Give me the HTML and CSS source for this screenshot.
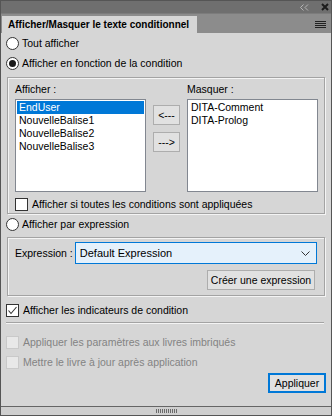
FILE: index.html
```html
<!DOCTYPE html>
<html lang="fr">
<head>
    <meta charset="UTF-8">
    <title>Afficher/Masquer le texte conditionnel</title>
    <link rel="stylesheet" href="styles.css">
</head>
<body>
    <div class="panel">
        <div class="titlebar">
            <svg class="collapse" width="9" height="7" viewBox="0 0 9 7">
                <path d="M3.5 0.5 L0.5 3.5 L3.5 6.5 M8 0.5 L5 3.5 L8 6.5" fill="none" stroke="#b4b4b4" stroke-width="1"/>
            </svg>
            <svg class="close" width="8" height="8" viewBox="0 0 8 8">
                <path d="M1 1 L7 7 M7 1 L1 7" stroke="#1c1c1c" stroke-width="2"/>
            </svg>
        </div>

        <div class="tabs">
            <div class="tab">Afficher/Masquer le texte conditionnel</div>
            <svg class="menu" width="11" height="8" viewBox="0 0 11 8">
                <path d="M0 0.5 H11 M0 2.5 H11 M0 4.5 H11 M0 6.5 H11" stroke="#222" stroke-width="1"/>
            </svg>
        </div>

        <div class="content">
            <div class="opt"><span class="radio"></span>Tout afficher</div>
            <div class="opt"><span class="radio on"></span>Afficher en fonction de la condition</div>

            <div class="group cond">
                <div class="cols">
                    <div class="col">
                        <div class="lbl">Afficher :</div>
                        <ul class="list">
                            <li class="sel">EndUser</li>
                            <li>NouvelleBalise1</li>
                            <li>NouvelleBalise2</li>
                            <li>NouvelleBalise3</li>
                        </ul>
                    </div>
                    <div class="movers">
                        <button class="btn small">&lt;---</button>
                        <button class="btn small">---&gt;</button>
                    </div>
                    <div class="col">
                        <div class="lbl">Masquer :</div>
                        <ul class="list">
                            <li>DITA-Comment</li>
                            <li>DITA-Prolog</li>
                        </ul>
                    </div>
                </div>
                <div class="opt sub"><span class="check"></span>Afficher si toutes les conditions sont appliquées</div>
            </div>

            <div class="opt expr-opt"><span class="radio"></span>Afficher par expression</div>

            <div class="group expr">
                <div class="expr-row">
                    <span class="expr-label">Expression :</span>
                    <div class="select">
                        <span>Default Expression</span>
                        <svg width="9" height="5" viewBox="0 0 9 5">
                            <path d="M0.5 0.5 L4.5 4.5 L8.5 0.5" fill="none" stroke="#333" stroke-width="1"/>
                        </svg>
                    </div>
                </div>
                <div class="expr-actions">
                    <button class="btn create">Créer une expression</button>
                </div>
            </div>

            <div class="opt flags">
                <span class="check">
                    <svg width="11" height="11" viewBox="0 0 11 11">
                        <path d="M1.5 5.5 L4 8.5 L9.5 2" fill="none" stroke="#333" stroke-width="1.1"/>
                    </svg>
                </span>Afficher les indicateurs de condition
            </div>
            <div class="sep"></div>
            <div class="opt off"><span class="check"></span>Appliquer les paramètres aux livres imbriqués</div>
            <div class="opt off"><span class="check"></span>Mettre le livre à jour après application</div>

            <div class="footer-actions">
                <button class="btn apply">Appliquer</button>
            </div>
        </div>

        <div class="grip-bar">
            <div class="grip"></div>
        </div>
    </div>
</body>
</html>
```

FILE: styles.css
```css
body {
    margin: 0;
    font-family: "Liberation Sans", Arial, sans-serif;
    font-size: 10.5px;
    color: #000;
}
.panel {
    width: 332px;
    height: 416px;
    box-sizing: border-box;
    border: 1px solid #555;
    background-color: #d6d6d6;
    display: flex;
    flex-direction: column;
}
.titlebar {
    height: 12px;
    background-color: #6f6f6f;
    display: flex;
    justify-content: flex-end;
    align-items: center;
    gap: 12px;
    padding-right: 2px;
}
.tabs {
    height: 20px;
    box-sizing: border-box;
    padding-top: 2px;
    background-color: #8c8c8c;
    border-top: 1px solid #7c7c7c;
    display: flex;
    align-items: stretch;
    justify-content: space-between;
}
.tab {
    width: 195px;
    margin-left: 1px;
    background-color: #d6d6d6;
    font-weight: bold;
    font-size: 10px;
    line-height: 18px;
    padding-left: 6px;
    box-sizing: border-box;
}
.tabs .menu {
    align-self: center;
    margin: 0 5px 0 0;
}
.content {
    flex: 1;
    padding: 0 5px 0 5px;
    display: flex;
    flex-direction: column;
}
.opt {
    height: 20px;
    display: flex;
    align-items: center;
    white-space: nowrap;
}
.radio {
    width: 13px;
    height: 13px;
    box-sizing: border-box;
    border: 1px solid #333;
    border-radius: 50%;
    background-color: #fff;
    margin-right: 3px;
    display: flex;
    align-items: center;
    justify-content: center;
}
.radio.on::after {
    content: "";
    width: 7px;
    height: 7px;
    border-radius: 50%;
    background-color: #1a1a1a;
}
.check {
    width: 13px;
    height: 13px;
    box-sizing: border-box;
    border: 1px solid #333;
    background-color: #fff;
    margin-right: 4px;
    display: flex;
    align-items: center;
    justify-content: center;
}
.opt.off {
    color: #838383;
}
.opt.off .check {
    border-color: #c9c9c9;
    background-color: #e8e8e8;
}
.group {
    margin-left: 1px;
    margin-right: 1px;
    border: 1px solid #a3a3a3;
    box-shadow: 1px 1px 0 #f4f4f4, inset 1px 1px 0 #f4f4f4;
}
.cond {
    margin-top: 4px;
    padding: 5px 7px 1px 7px;
}
.cols {
    display: grid;
    grid-template-columns: 131px 27px 131px;
    column-gap: 7px;
}
.lbl {
    line-height: 13px;
    margin-bottom: 3px;
}
.list {
    list-style: none;
    margin: 0;
    padding: 1px;
    height: 93px;
    box-sizing: border-box;
    background-color: #fff;
    border: 1px solid #828790;
    font-size: 10.5px;
}
.list li {
    height: 13px;
    line-height: 13px;
    padding-left: 2px;
}
.list li.sel {
    background-color: #0078d7;
    color: #fff;
}
.movers {
    padding-top: 22px;
    display: flex;
    flex-direction: column;
    gap: 7px;
}
.btn {
    font-family: inherit;
    font-size: 10.5px;
    background-color: #e1e1e1;
    border: 1px solid #adadad;
    padding: 0;
    height: 20px;
    color: #000;
}
.btn.small {
    width: 27px;
}
.opt.sub {
    margin-top: 4px;
    height: 16px;
}
.expr {
    margin-top: 3px;
    padding: 4px 7px 5px 7px;
}
.expr-row {
    display: flex;
    align-items: center;
}
.expr-label {
    width: 60px;
}
.select {
    width: 243px;
    height: 22px;
    box-sizing: border-box;
    border: 1px solid #0078d7;
    background-color: #e5f1fb;
    display: flex;
    align-items: center;
    justify-content: space-between;
    padding: 0 6px 0 4px;
    font-size: 11px;
}
.expr-actions {
    display: flex;
    justify-content: flex-end;
    margin-top: 6px;
    padding-right: 2px;
}
.btn.create {
    width: 108px;
}
.opt.flags {
    margin-top: 4px;
}
.sep {
    margin: 2px 2px 8px 0;
    height: 1px;
    background-color: #a3a3a3;
    border-bottom: 1px solid #f4f4f4;
}
.footer-actions {
    display: flex;
    justify-content: flex-end;
    margin-top: 1px;
}
.btn.apply {
    width: 58px;
    border: 2px solid #0078d7;
}
.grip-bar {
    height: 8px;
    border-top: 1px solid #666;
    background-color: #cfcfcf;
    display: flex;
    justify-content: center;
    align-items: center;
}
.grip {
    width: 21px;
    height: 4px;
    background: repeating-linear-gradient(to right, #6a6a6a 0 1px, transparent 1px 2px);
}
```
